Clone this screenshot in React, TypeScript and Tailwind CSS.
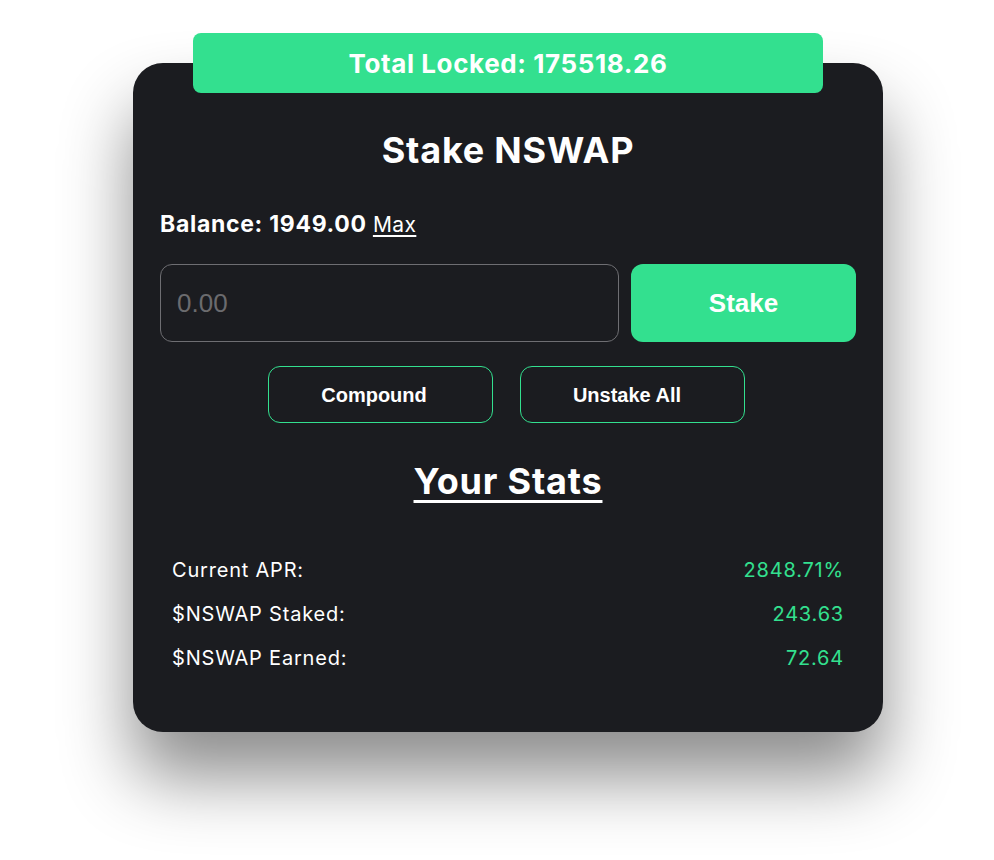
export default function App() {
  const stats = [
    { label: 'Current APR:', value: '2848.71%' },
    { label: '$NSWAP Staked:', value: '243.63' },
    { label: '$NSWAP Earned:', value: '72.64' },
  ]

  return (
    <div className="min-h-[860px] w-full bg-white flex justify-center pl-[22px] pt-[33px] font-['Inter',sans-serif]">
      <div className="w-[750px] flex flex-col items-center">
        <div className="relative z-10 w-[630px] h-[60px] rounded-lg bg-[#33e08f] flex items-center justify-center">
          <span className="text-white text-[26px] font-bold tracking-[0.6px]">Total Locked: 175518.26</span>
        </div>

        <div className="-mt-[30px] w-[750px] rounded-[30px] bg-[#1b1c20] px-[27px] pt-[66px] pb-[60px] shadow-[0_45px_70px_rgba(0,0,0,0.45)] text-white">
          <h1 className="text-center text-[36px] leading-[42px] font-bold tracking-[0.8px]">Stake NSWAP</h1>

          <div className="mt-[39px] text-[23px] leading-[28px] font-bold tracking-[0.7px]">
            Balance: 1949.00{' '}
            <span className="font-normal text-[21px] tracking-[0.4px] underline underline-offset-[3px]">Max</span>
          </div>

          <div className="mt-[25px] flex gap-[12px]">
            <input
              placeholder="0.00"
              className="flex-1 h-[78px] rounded-xl border border-[#6e6e72] bg-transparent px-4 text-[26px] font-['Liberation_Sans',Arial,sans-serif] text-white placeholder:text-[#6b6b6e] outline-none"
            />
            <button
              type="button"
              className="w-[225px] h-[78px] rounded-xl bg-[#33e08f] text-white text-[26px] font-bold font-['Liberation_Sans',Arial,sans-serif]"
            >
              Stake
            </button>
          </div>

          <div className="mt-[24px] flex justify-center gap-[27px] pr-[4px]">
            <button
              type="button"
              className="w-[225px] h-[57px] pr-[12px] rounded-xl border border-[#33e08f] text-white text-[20px] font-bold font-['Liberation_Sans',Arial,sans-serif]"
            >
              Compound
            </button>
            <button
              type="button"
              className="w-[225px] h-[57px] pr-[10px] rounded-xl border border-[#33e08f] text-white text-[20px] font-bold font-['Liberation_Sans',Arial,sans-serif]"
            >
              Unstake All
            </button>
          </div>

          <h2 className="mt-[37px] text-center text-[36px] leading-[42px] font-bold tracking-[0.8px] underline underline-offset-[6px] decoration-[3px]">
            Your Stats
          </h2>

          <div className="mt-[54px] px-[12px] flex flex-col gap-[16px]">
            {stats.map((s) => (
              <div key={s.label} className="flex justify-between text-[20px] leading-[28px] tracking-[0.8px]">
                <span>{s.label}</span>
                <span className="text-[#33e08f]">{s.value}</span>
              </div>
            ))}
          </div>
        </div>
      </div>
    </div>
  )
}
